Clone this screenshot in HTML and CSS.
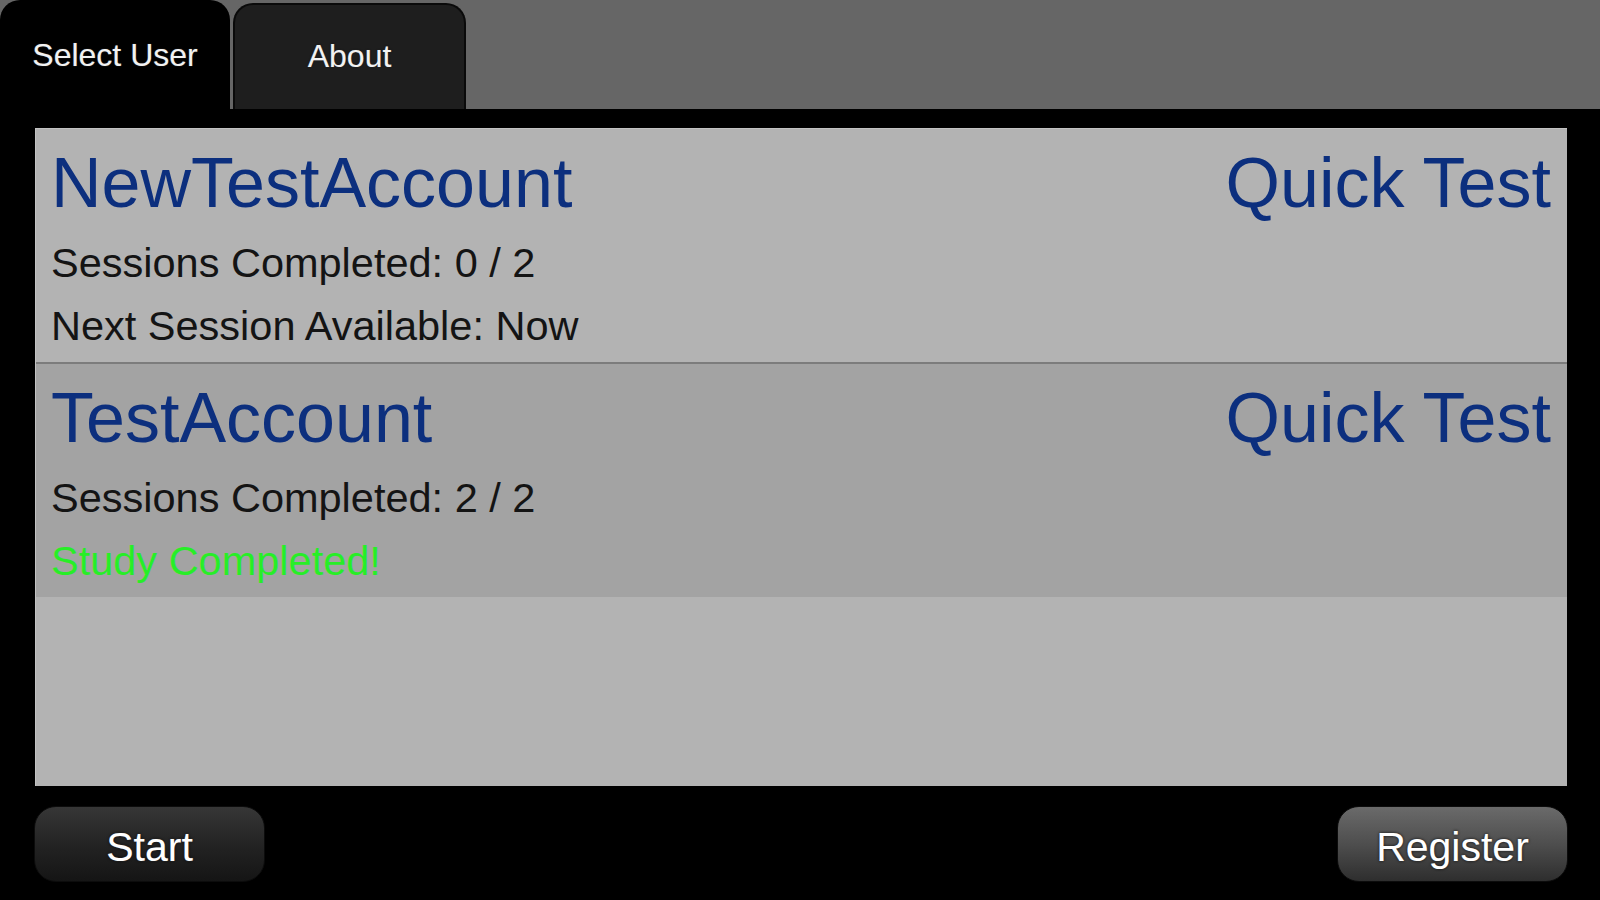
FILE: index.html
```html
<!DOCTYPE html>
<html lang="en">
<head>
  <meta charset="UTF-8">
  <title>Select User</title>
  <link rel="stylesheet" href="styles.css">
</head>
<body>
  <div class="tabbar">
    <div class="tab active">Select User</div>
    <div class="tab">About</div>
  </div>

  <div class="content">
    <div class="user-list">
      <div class="user-row">
        <div class="user-head">
          <span class="user-name">NewTestAccount</span>
          <span class="quick-test">Quick Test</span>
        </div>
        <div class="info">Sessions Completed: 0 / 2</div>
        <div class="info">Next Session Available: Now</div>
      </div>
      <div class="user-row selected">
        <div class="user-head">
          <span class="user-name">TestAccount</span>
          <span class="quick-test">Quick Test</span>
        </div>
        <div class="info">Sessions Completed: 2 / 2</div>
        <div class="info done">Study Completed!</div>
      </div>
    </div>

    <div class="actions">
      <button class="btn">Start</button>
      <button class="btn light">Register</button>
    </div>
  </div>
</body>
</html>
```

FILE: styles.css
```css
body {
  margin: 0;
  height: 900px;
  overflow: hidden;
  background: #000;
  font-family: "Liberation Sans", Arial, sans-serif;
}

.tabbar {
  display: flex;
  align-items: flex-end;
  height: 109px;
  background: #666666;
}

.tab {
  box-sizing: border-box;
  width: 230px;
  height: 106px;
  padding-top: 31px;
  line-height: 40px;
  font-size: 32px;
  color: #f2f2f2;
  text-align: center;
  text-shadow: 0 0 2px #000, 0 0 1px #888;
  border-radius: 20px 20px 0 0;
  background: #1e1e1e;
}

.tab.active {
  height: 109px;
  padding-top: 35px;
  background: #000;
}

.tab + .tab {
  width: 233px;
  margin-left: 3px;
  border: 2px solid #0a0a0a;
  border-bottom: none;
}

.content {
  padding: 19px 32px 0 34px;
}

.user-list {
  margin: 0 1px;
  height: 658px;
  background: #b3b3b3;
  border-top: 1px solid #c2c2c2;
  border-left: 1px solid #c2c2c2;
  box-sizing: border-box;
}

.user-row {
  height: 233px;
  box-sizing: border-box;
  padding: 7px 16px 0 15px;
  background: #b3b3b3;
}

.user-row:first-child {
  height: 235px;
  border-bottom: 2px solid #7c7c7c;
}

.user-row.selected {
  background: #a3a3a3;
}

.user-head {
  display: flex;
  justify-content: space-between;
  align-items: baseline;
  height: 95px;
  line-height: 95px;
  font-size: 70px;
  color: #0c2f7e;
}

.info {
  font-size: 41.5px;
  line-height: 63px;
  color: #141414;
}

.info.done {
  color: #27ee27;
}

.actions {
  display: flex;
  justify-content: space-between;
  margin-top: 20px;
}

.btn {
  width: 231px;
  height: 76px;
  padding: 4px 0 0;
  line-height: 72px;
  font-family: inherit;
  font-size: 41px;
  color: #fff;
  text-shadow: 0 0 3px #000, 0 0 1px #999;
  border: 1px solid #0c0c0c;
  border-radius: 22px;
  background: linear-gradient(#363636, #222222 55%, #151515);
}

.btn.light {
  background: linear-gradient(#6a6a6a, #4e4e4e 50%, #2e2e2e);
}
```
